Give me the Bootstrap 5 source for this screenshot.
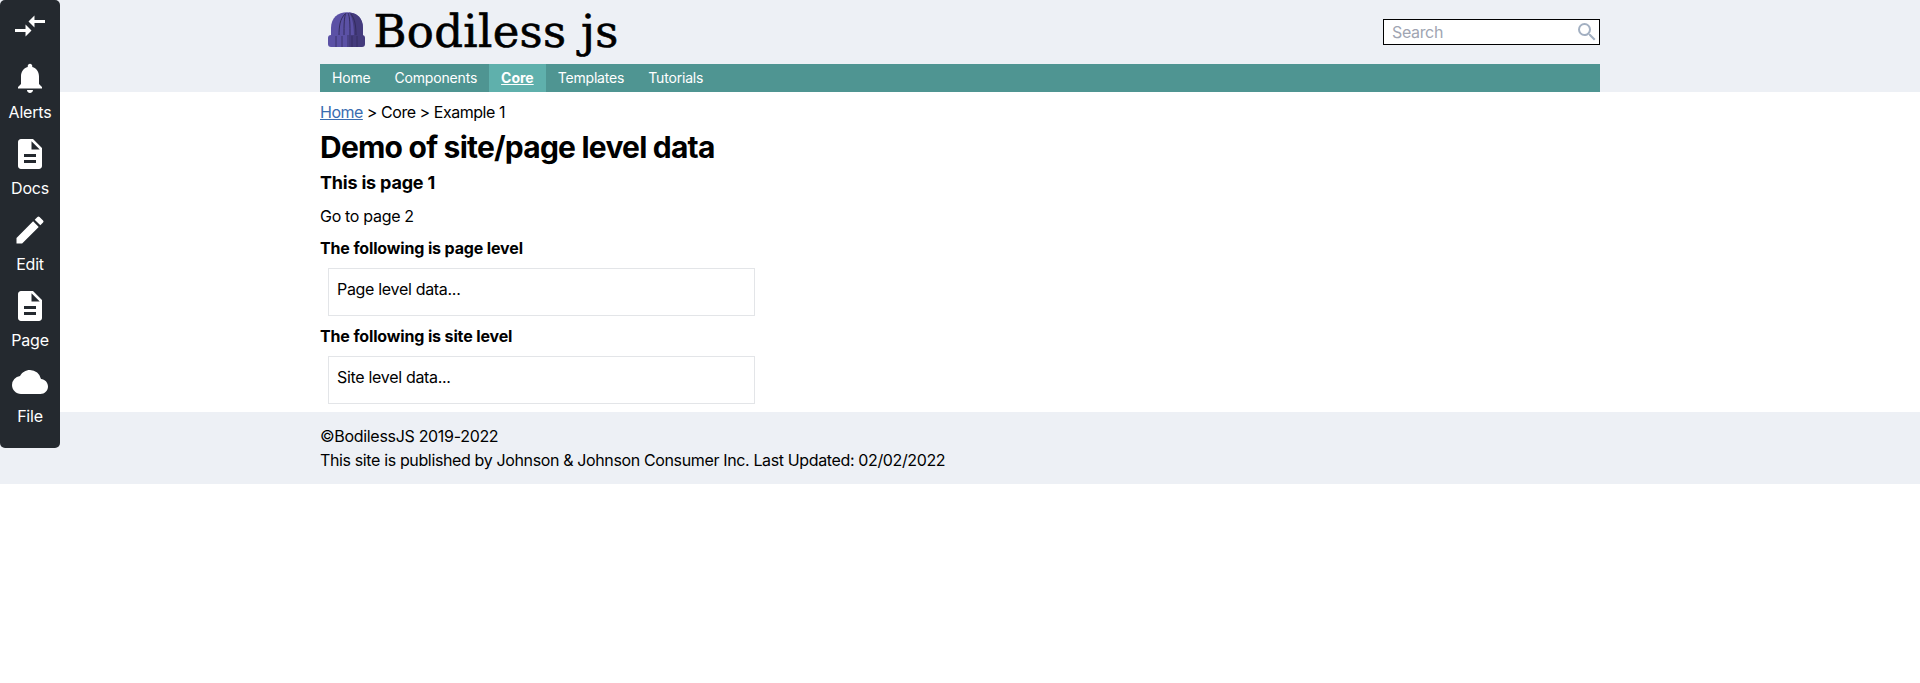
<!DOCTYPE html>
<html lang="en">
<head>
<meta charset="utf-8">
<meta name="viewport" content="width=device-width, initial-scale=1">
<title>Bodiless js</title>
<link href="https://cdn.jsdelivr.net/npm/bootstrap@5.3.0/dist/css/bootstrap.min.css" rel="stylesheet">
<style>
body { font-family: Inter, "Liberation Sans", sans-serif; font-size: 16px; color: #000; letter-spacing: -.31px; }
.band { background: #edf0f5; }
.site-width { width: 1280px; margin: 0 auto; }
.brand-row { height: 64px; }
.logo { margin-left: 8px; }
.search-box { width: 217px; height: 26px; border: 1px solid #000; background: #fff; padding: 0 0 0 8px; }
.search-box input { width: 160px; outline: 0; color: #000; letter-spacing: -.35px; }
.search-box input::placeholder { color: #a0a5b2; opacity: 1; }
.main-menu { background: #4f9592; height: 28px; font-size: 14px; letter-spacing: -.18px; }
.main-menu .nav-link { color: #fff; padding: 0 12px; line-height: 28px; }
.main-menu .nav-link.active { background: #5fb0ac; font-weight: 700; text-decoration: underline; letter-spacing: -.02px; }
.crumbs { height: 40px; line-height: 41px; letter-spacing: -.46px; }
.crumbs a { color: #3a6cb0; letter-spacing: -.5px; }
h1 { font-size: 30px; font-weight: 700; line-height: 31px; height: 32px; letter-spacing: -.78px; margin: 0; }
h2 { font-size: 18px; font-weight: 700; line-height: 38px; letter-spacing: -.2px; margin: 0; }
h3 { font-size: 16px; font-weight: 700; line-height: 24px; letter-spacing: -.14px; margin: 0; }
.page-link-row { padding: 2px 0 8px; line-height: 24px; }
.data-box { width: 427px; height: 48px; margin: 8px; padding: 8px; border: 1px solid #e3e5e8; line-height: 24px; }
.foot { height: 72px; padding-top: 12px; line-height: 24px; }
.publisher { letter-spacing: -.365px; }
.tool-menu { width: 60px; height: 448px; background: #24292f; color: #fff; border-radius: 5px; padding-top: 8px; z-index: 10; }
.tool-menu svg { width: 36px; height: 36px; fill: #fff; display: block; }
.tool-menu a { color: #fff; text-decoration: none; line-height: 24px; height: 76px; letter-spacing: -.2px; }
.tool-menu a:first-child { height: 52px; }
</style>
</head>
<body>
<nav class="tool-menu position-absolute top-0 start-0 d-flex flex-column">
  <a href="#" aria-label="Switch side" class="d-flex flex-column align-items-center"><svg viewBox="0 0 24 24"><path d="M9.01 14H2v2h7.01v3L13 15l-3.99-4v3zm5.98-1v-3H22V8h-7.01V5L11 9l3.99 4z"/></svg></a>
  <a href="#" class="d-flex flex-column align-items-center gap-1"><svg viewBox="0 0 24 24"><path d="M12 22c1.1 0 2-.9 2-2h-4c0 1.1.89 2 2 2zm6-6v-5c0-3.07-1.64-5.64-4.5-6.32V4c0-.83-.67-1.500-1.500-1.500s-1.500.67-1.500 1.500v.68C7.63 5.360 6 7.920 6 11v5l-2 2v1h16v-1l-2-2z"/></svg><span>Alerts</span></a>
  <a href="#" class="d-flex flex-column align-items-center gap-1"><svg viewBox="0 0 24 24"><path d="M14 2H6c-1.100 0-1.990.9-1.990 2L4 20c0 1.100.89 2 1.990 2H18c1.100 0 2-.9 2-2V8l-6-6zm2 16H8v-2h8v2zm0-4H8v-2h8v2zm-3-5V3.500L18.500 9H13z"/></svg><span>Docs</span></a>
  <a href="#" class="d-flex flex-column align-items-center gap-1"><svg viewBox="0 0 24 24"><path d="M3 17.250V21h3.750L17.810 9.940l-3.750-3.750L3 17.250zM20.710 7.040a1 1 0 0 0 0-1.410l-2.340-2.340a1 1 0 0 0-1.410 0l-1.830 1.830 3.750 3.750 1.830-1.830z"/></svg><span>Edit</span></a>
  <a href="#" class="d-flex flex-column align-items-center gap-1"><svg viewBox="0 0 24 24"><path d="M14 2H6c-1.100 0-1.990.9-1.990 2L4 20c0 1.100.89 2 1.990 2H18c1.100 0 2-.9 2-2V8l-6-6zm2 16H8v-2h8v2zm0-4H8v-2h8v2zm-3-5V3.500L18.500 9H13z"/></svg><span>Page</span></a>
  <a href="#" class="d-flex flex-column align-items-center gap-1"><svg viewBox="0 0 24 24"><path d="M19.350 10.040A7.490 7.490 0 0 0 12 4C9.110 4 6.600 5.640 5.350 8.040A5.994 5.994 0 0 0 0 14c0 3.310 2.690 6 6 6h13c2.760 0 5-2.240 5-5 0-2.640-2.050-4.780-4.650-4.960z"/></svg><span>File</span></a>
</nav>

<header class="band">
  <div class="site-width">
    <div class="brand-row d-flex align-items-center justify-content-between">
      <svg class="logo" width="300" height="64" viewBox="0 0 300 64" role="img" aria-label="Bodiless js">
        <path fill="#5b51a5" d="M3 37V28C3 18 10 12.300 19 12.300S35 18 35 28v9z"/>
        <path fill="#443b7d" d="M21 12.500C30 13 35 19 35 28v9h-9c0-10-1-19-5-24.500z"/>
        <path fill="none" stroke="#332c5e" stroke-width="1" d="M18 13c-2 4-2 12-2 23M20 13c2 4 2 12 2 23M17 14c-5 5-6 12-6 22M23 14c4 5 5 12 5 22"/>
        <path fill="#5b51a5" d="M3 35h18v12H3q-3 0-3-3v-6q0-3 3-3z"/>
        <path fill="#443b7d" d="M21 35h13q3 0 3 3v6q0 3-3 3H21z"/>
        <path fill="none" stroke="#332c5e" stroke-width=".8" d="M8 36v11M14 36v11M20 35v12M24 36v11M29 36v11"/>
        <text x="45.500" y="47.300" font-family="DejaVu Serif, serif" font-size="45" letter-spacing=".28" stroke="#000" stroke-width=".6">Bodiless js</text>
      </svg>
      <form class="search-box d-flex align-items-center justify-content-between" onsubmit="return false">
        <input class="border-0 p-0 bg-transparent" type="text" placeholder="Search" aria-label="Search">
        <svg width="24" height="24" viewBox="0 0 24 24" fill="#a3b0c2"><path d="M15.500 14h-.79l-.28-.27A6.471 6.471 0 0 0 16 9.500 6.500 6.500 0 1 0 9.500 16c1.610 0 3.090-.59 4.230-1.570l.27.28v.79l5 4.990L20.490 19l-4.990-5zm-6 0C7.010 14 5 11.990 5 9.500S7.010 5 9.500 5 14 7.010 14 9.500 11.990 14 9.500 14z"/></svg>
      </form>
    </div>
    <nav class="main-menu nav">
      <a class="nav-link" href="#">Home</a>
      <a class="nav-link" href="#">Components</a>
      <a class="nav-link active" href="#">Core</a>
      <a class="nav-link" href="#">Templates</a>
      <a class="nav-link" href="#">Tutorials</a>
    </nav>
  </div>
</header>

<main class="site-width">
  <div class="crumbs"><a href="#">Home</a> &gt; Core &gt; Example 1</div>
  <h1>Demo of site/page level data</h1>
  <h2>This is page 1</h2>
  <div class="page-link-row">Go to page 2</div>
  <h3>The following is page level</h3>
  <div class="data-box">Page level data...</div>
  <h3>The following is site level</h3>
  <div class="data-box mb-0">Site level data...</div>
</main>

<footer class="band mt-2 foot">
  <div class="site-width">
    <div>©BodilessJS 2019-2022</div>
    <div class="publisher">This site is published by Johnson &amp; Johnson Consumer Inc. Last Updated: 02/02/2022</div>
  </div>
</footer>
<script src="https://cdn.jsdelivr.net/npm/bootstrap@5.3.0/dist/js/bootstrap.bundle.min.js"></script>
</body>
</html>
